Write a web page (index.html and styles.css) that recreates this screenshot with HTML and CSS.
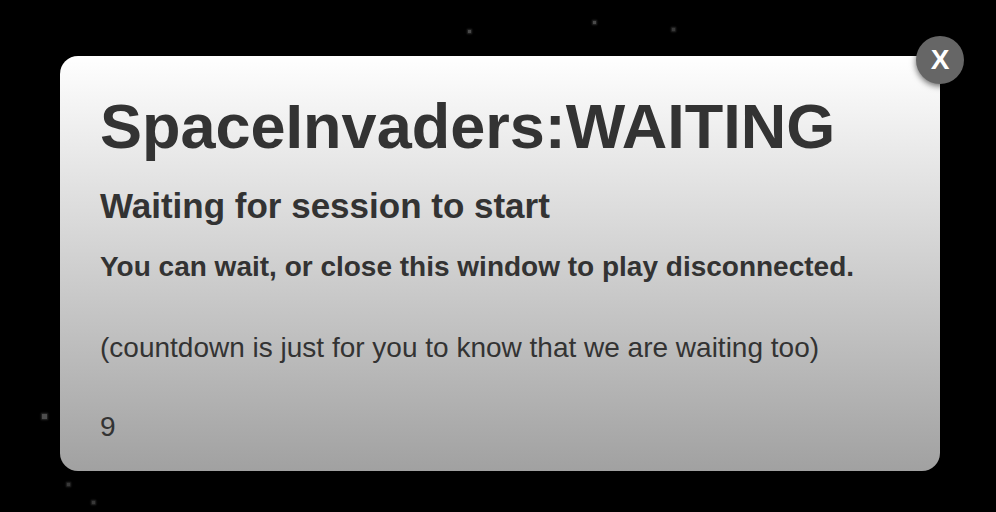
FILE: index.html
```html
<!DOCTYPE html>
<html>
<head>
<meta charset="utf-8">
<link rel="stylesheet" href="styles.css">
</head>
<body>
<div class="space">
  <span class="star" style="left:468px;top:30px"></span>
  <span class="star" style="left:593px;top:21px"></span>
  <span class="star dim" style="left:672px;top:28px"></span>
  <span class="star big" style="left:42px;top:414px"></span>
  <span class="star dim" style="left:67px;top:483px"></span>
  <span class="star dim" style="left:92px;top:501px"></span>
  <div class="modal">
    <h1 class="title">SpaceInvaders:WAITING</h1>
    <h2 class="subtitle">Waiting for session to start</h2>
    <p class="lead">You can wait, or close this window to play disconnected.</p>
    <p class="note">(countdown is just for you to know that we are waiting too)</p>
    <p class="count">9</p>
    <button class="close">X</button>
  </div>
</div>
</body>
</html>
```
FILE: styles.css
```css
html, body {
  margin: 0;
  padding: 0;
  background: #000;
  width: 996px;
  height: 512px;
  overflow: hidden;
}
.space {
  position: relative;
  width: 996px;
  height: 512px;
  padding-top: 56px;
  box-sizing: border-box;
  font-family: "Liberation Sans", Arial, sans-serif;
}
.star {
  position: absolute;
  width: 3px;
  height: 3px;
  background: #4a4a4a;
  box-shadow: 0 0 2px 1px #2a2a2a;
}
.star.dim {
  background: #383838;
}
.star.big {
  width: 5px;
  height: 5px;
  background: #4d4d4d;
}
.modal {
  position: relative;
  margin-left: 60px;
  width: 880px;
  height: 415px;
  box-sizing: border-box;
  padding: 0 40px;
  border-radius: 18px;
  background: linear-gradient(to bottom, #ffffff 0%, #a1a1a1 100%);
  color: #333;
  display: flex;
  flex-direction: column;
}
.title {
  margin: 39px 0 0;
  font-size: 63px;
  line-height: 1;
  font-weight: bold;
}
.subtitle {
  margin: 30px 0 0;
  font-size: 35px;
  line-height: 1;
  font-weight: bold;
}
.lead {
  margin: 30px 0 0;
  font-size: 28px;
  line-height: 1;
  font-weight: bold;
}
.note {
  margin: 53px 0 0;
  font-size: 28px;
  line-height: 1;
}
.count {
  margin: 51px 0 0;
  font-size: 28px;
  line-height: 1;
}
.close {
  position: absolute;
  right: -24px;
  top: -20px;
  width: 48px;
  height: 48px;
  border-radius: 50%;
  border: none;
  background: #666;
  color: #fff;
  font-family: "Liberation Sans", Arial, sans-serif;
  font-weight: bold;
  font-size: 28px;
  line-height: 48px;
  padding: 0;
  box-shadow: 0 2px 6px rgba(0,0,0,0.6);
}
```
